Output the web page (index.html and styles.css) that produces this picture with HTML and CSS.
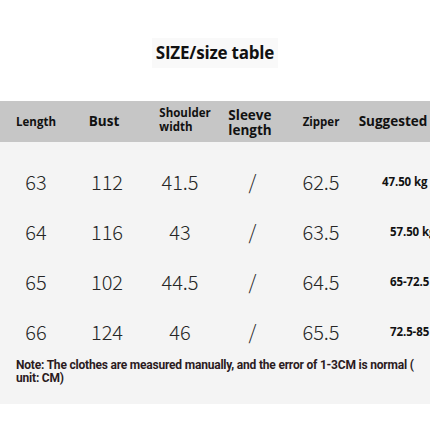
FILE: index.html
```html
<!DOCTYPE html>
<html>
<head>
<meta charset="utf-8">
<link rel="stylesheet" href="styles.css">
</head>
<body>
<div class="page">
  <div class="title-wrap"><h1 class="title">SIZE/size table</h1></div>
  <div class="head row">
    <div class="hc"><span class="h-sm">Length</span></div>
    <div class="hc hc-bust"><span class="h-lg">Bust</span></div>
    <div class="hc hc-shoulder"><span class="h-sm two">Shoulder<br>width</span></div>
    <div class="hc hc-sleeve"><span class="h-lg two">Sleeve<br>length</span></div>
    <div class="hc"><span class="h-sm">Zipper</span></div>
    <div class="hc"><span class="h-lg">Suggested</span></div>
  </div>
  <div class="panel">
    <div class="row data">
      <div class="c">63</div><div class="c">112</div><div class="c">41.5</div><div class="c slash">/</div><div class="c">62.5</div><div class="w w-first">47.50 kg</div>
    </div>
    <div class="row data">
      <div class="c">64</div><div class="c">116</div><div class="c">43</div><div class="c slash">/</div><div class="c">63.5</div><div class="w">57.50 kg</div>
    </div>
    <div class="row data">
      <div class="c">65</div><div class="c">102</div><div class="c">44.5</div><div class="c slash">/</div><div class="c">64.5</div><div class="w">65-72.5 kg</div>
    </div>
    <div class="row data">
      <div class="c">66</div><div class="c">124</div><div class="c">46</div><div class="c slash">/</div><div class="c">65.5</div><div class="w">72.5-85 kg</div>
    </div>
    <p class="note">Note: The clothes are measured manually, and the error of 1-3CM is normal (<br>unit: CM)</p>
  </div>
</div>
</body>
</html>
```

FILE: styles.css
```css
html, body {
  margin: 0;
  padding: 0;
  background: #ffffff;
}
.page {
  width: 430px;
  height: 430px;
  overflow: hidden;
  font-family: "Open Sans", "Noto Sans", sans-serif;
}
.title-wrap {
  display: flex;
  justify-content: center;
  align-items: flex-start;
  padding-top: 38px;
  height: 101px;
  box-sizing: border-box;
}
.title {
  margin: 0;
  font-size: 17px;
  font-weight: 700;
  color: #111;
  line-height: 30px;
  height: 30px;
  padding: 0 4px;
  background: #f9f9f9;
  letter-spacing: -0.2px;
}
.row {
  display: grid;
  grid-template-columns: 72px 70px 76px 68px 70px 74px;
}
.head {
  height: 41px;
  background: #c6c6c6;
  align-items: center;
  overflow: hidden;
}
.hc {
  display: flex;
  justify-content: center;
  color: #111;
  font-weight: 700;
}
.hc-bust { padding-right: 6px; }
.hc-shoulder { padding-left: 10px; }
.hc-sleeve { padding-right: 4px; }
.h-sm {
  font-size: 11.5px;
  line-height: 14px;
}
.h-lg {
  font-size: 13.5px;
  line-height: 15px;
}
.hc-shoulder .h-sm { line-height: 14px; margin-top: -3px; }
.hc-sleeve .h-lg { margin-top: 2px; }
.two { text-align: left; }
.panel {
  background: #f4f4f4;
  height: 262px;
  padding-top: 14px;
  box-sizing: border-box;
}
.data {
  height: 50px;
  align-items: center;
}
.c {
  text-align: center;
  font-family: "Noto Sans CJK SC", "Noto Sans", sans-serif;
  font-weight: 300;
  font-size: 20px;
  color: #262626;
}
.slash {
  padding-left: 1px;
}
.w {
  padding-left: 34px;
  font-size: 11.5px;
  font-weight: 700;
  color: #111;
  white-space: nowrap;
  letter-spacing: -0.1px;
}
.w-first {
  padding-left: 26px;
}
.note {
  margin: 3px 0 0 16px;
  font-family: "Roboto", "Open Sans", sans-serif;
  font-weight: 700;
  font-size: 12px;
  line-height: 12.5px;
  color: #2b1b1e;
  letter-spacing: -0.2px;
}
```
